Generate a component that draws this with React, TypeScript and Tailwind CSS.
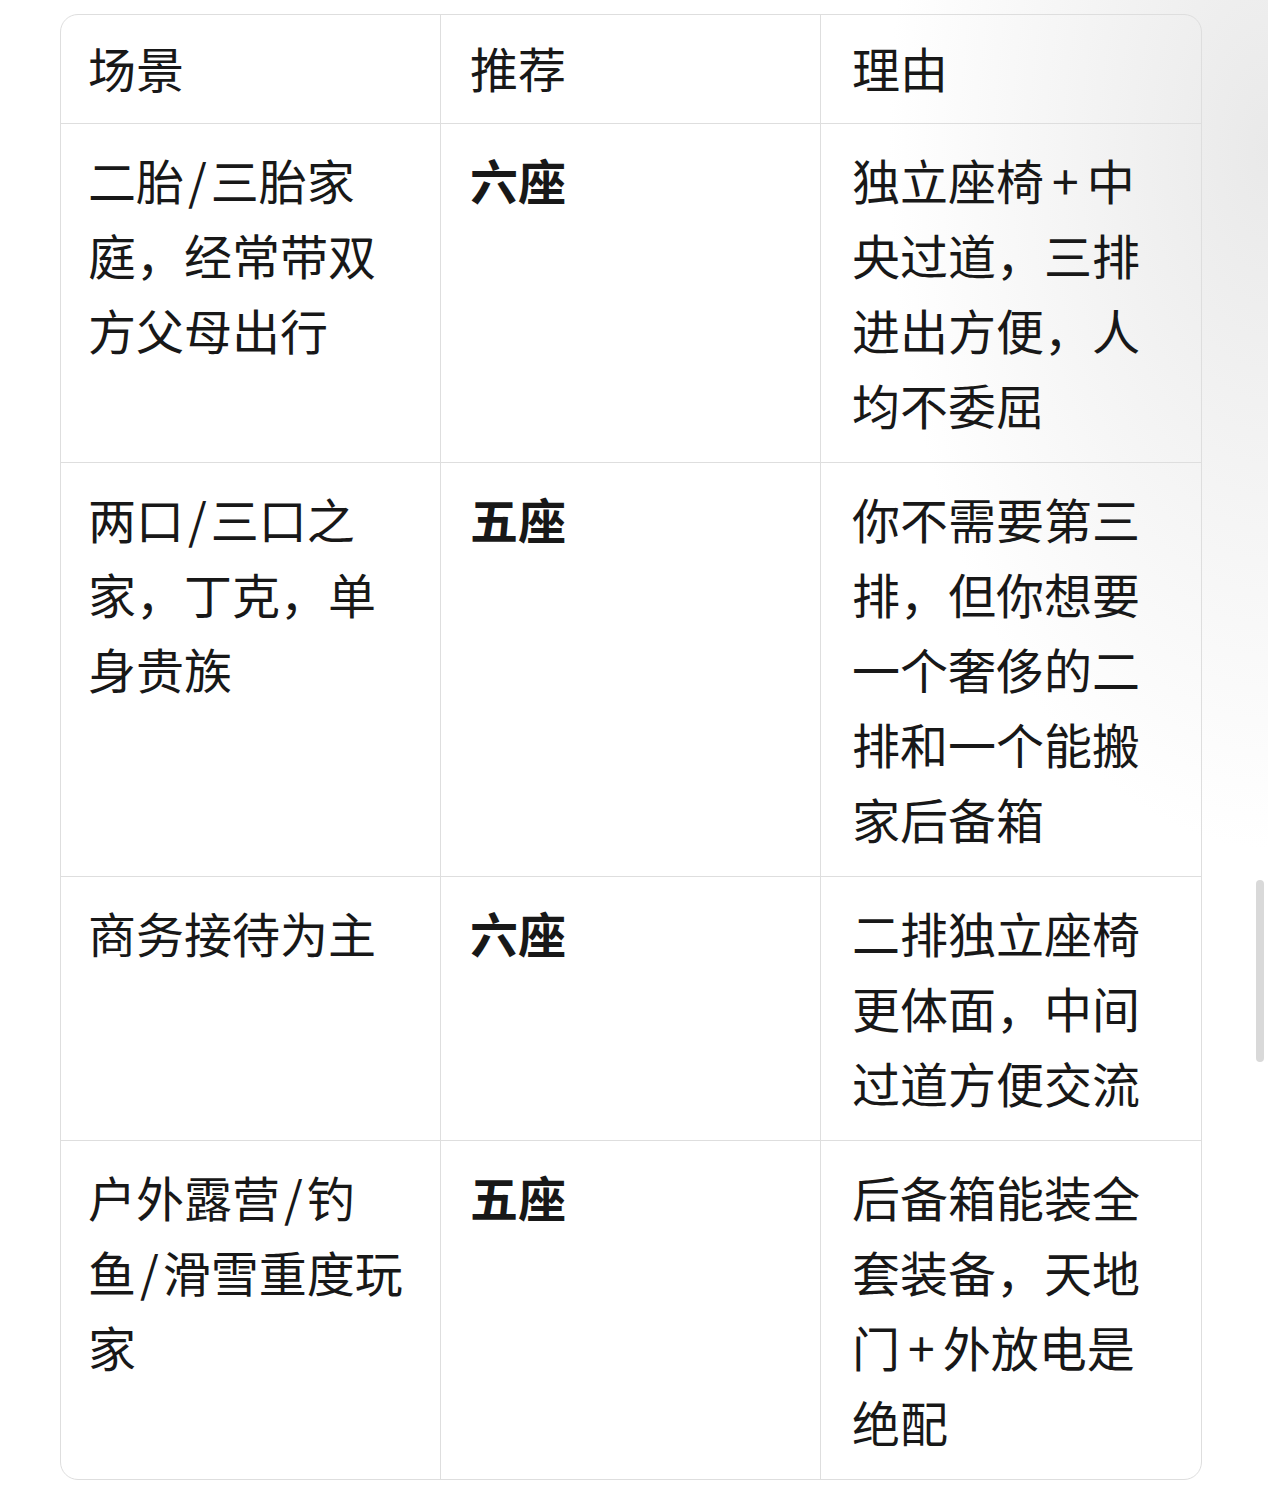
import React from "react";

type Row = { scene: string[]; rec: string; reason: string[] };

const rows: Row[] = [
  {
    scene: ["二胎/三胎家", "庭，经常带双", "方父母出行"],
    rec: "六座",
    reason: ["独立座椅+中", "央过道，三排", "进出方便，人", "均不委屈"],
  },
  {
    scene: ["两口/三口之", "家，丁克，单", "身贵族"],
    rec: "五座",
    reason: ["你不需要第三", "排，但你想要", "一个奢侈的二", "排和一个能搬", "家后备箱"],
  },
  {
    scene: ["商务接待为主"],
    rec: "六座",
    reason: ["二排独立座椅", "更体面，中间", "过道方便交流"],
  },
  {
    scene: ["户外露营/钓", "鱼/滑雪重度玩", "家"],
    rec: "五座",
    reason: ["后备箱能装全", "套装备，天地", "门+外放电是", "绝配"],
  },
];

function Line({ text }: { text: string }) {
  const parts = text.split(/([/+])/);
  return (
    <div className="whitespace-nowrap">
      {parts.map((p, i) =>
        p === "/" ? (
          <span key={i} className="px-[4px]">/</span>
        ) : p === "+" ? (
          <span key={i} className="px-[8px]">+</span>
        ) : (
          <span key={i}>{p}</span>
        )
      )}
    </div>
  );
}

function Lines({ lines }: { lines: string[] }) {
  return (
    <>
      {lines.map((l, i) => (
        <Line key={i} text={l} />
      ))}
    </>
  );
}

export default function App() {
  return (
    <div
      className="relative w-[1268px] h-[1485px] overflow-hidden bg-white text-[#181818]"
      style={{ fontFamily: '"Noto Sans CJK SC", "Noto Sans", sans-serif' }}
    >
      <div className="absolute inset-0 pointer-events-none bg-[radial-gradient(ellipse_380px_700px_at_100%_10%,#e9e9e9,rgba(255,255,255,0)_100%)]" />
      <div className="relative pt-[14px] pl-[60px]">
        <div className="w-[1142px] border border-[#dedede] rounded-[18px] overflow-hidden">
          <div className="grid grid-cols-3 text-[48px] leading-[75px]">
            {["场景", "推荐", "理由"].map((h, i) => (
              <div
                key={h}
                className={
                  "pt-[15px] pb-[18px] border-b border-[#dedede] " +
                  (i === 0 ? "pl-[27px] border-r" : i === 1 ? "pl-[29px] border-r" : "pl-[31px]")
                }
              >
                {h}
              </div>
            ))}
            {rows.map((r, ri) => {
              const last = ri === rows.length - 1;
              const b = last ? "" : "border-b ";
              return (
                <React.Fragment key={ri}>
                  <div className={"pt-[18px] pb-[20px] pl-[27px] border-r border-[#dedede] " + b}>
                    <Lines lines={r.scene} />
                  </div>
                  <div className={"pt-[18px] pb-[20px] pl-[29px] border-r border-[#dedede] font-bold " + b}>
                    {r.rec}
                  </div>
                  <div className={"pt-[18px] pb-[20px] pl-[31px] border-[#dedede] " + b}>
                    <Lines lines={r.reason} />
                  </div>
                </React.Fragment>
              );
            })}
          </div>
        </div>
      </div>
      <div className="absolute left-[1256px] top-[880px] w-[8px] h-[182px] rounded-full bg-[#d9d9d9]" />
    </div>
  );
}
